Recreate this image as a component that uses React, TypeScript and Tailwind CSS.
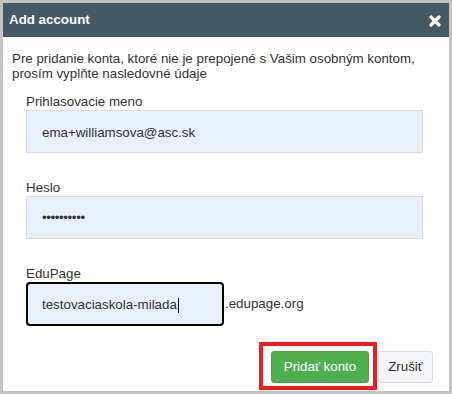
import React from "react";

export default function App() {
  const font = { fontFamily: '"Liberation Sans", Arial, sans-serif' };
  return (
    <div
      className="w-[452px] h-[394px] bg-[#c3c3c3] p-[3px] text-[13.33px] text-[#333]"
      style={font}
    >
      <div className="flex h-full flex-col bg-white">
        <div className="flex h-[34px] items-center justify-between bg-[#455a64] pl-[6px] pr-[8px]">
          <span className="font-bold text-white">Add account</span>
          <svg width="12" height="12" viewBox="0 0 12 12" className="mt-[1px]">
            <path
              d="M2 2 L10 10 M10 2 L2 10"
              stroke="#fff"
              strokeWidth="3.2"
              strokeLinecap="round"
            />
          </svg>
        </div>

        <div className="pl-[9px] pr-[20px] pt-[14px] leading-[15px]">
          Pre pridanie konta, ktoré nie je prepojené s Vašim osobným kontom,
          <br />
          prosím vyplňte nasledovné údaje
        </div>

        <div className="ml-[23px] mr-[26px] mt-[13px] flex flex-col">
          <label className="leading-[16px]">Prihlasovacie meno</label>
          <div className="flex h-[43px] items-center border border-[#dadada] bg-[#e8f0fe] pl-[15px] pt-[2px]">
            ema+williamsova@asc.sk
          </div>

          <label className="mt-[27px] leading-[16px]">Heslo</label>
          <div className="flex h-[43px] items-center border border-[#dadada] bg-[#e8f0fe] pl-[15px] pt-[1px] tracking-[-0.4px]">
            ••••••••••
          </div>

          <label className="mt-[27px] leading-[16px]">EduPage</label>
          <div className="flex items-center">
            <div className="flex h-[44px] w-[198px] items-center rounded-[4px] border-2 border-black bg-[#e8f0fe] pl-[14px] pt-[2px]">
              <span>testovaciaskola-milada</span>
              <span className="ml-[1px] inline-block h-[15px] w-[1px] bg-black" />
            </div>
            <span className="ml-[1px]">.edupage.org</span>
          </div>
        </div>

        <div className="mt-[25px] flex justify-end gap-[9px] pr-[16px]">
          <div className="relative">
            <div className="flex h-[32px] w-[98px] items-center justify-center rounded-[3px] border border-[#47a447] bg-[#4fae4f] text-white">
              Pridať konto
            </div>
            <div className="pointer-events-none absolute -left-[12px] -right-[8px] -top-[9px] -bottom-[7px] border-4 border-[#ed1c24]" />
          </div>
          <div className="flex h-[32px] w-[55px] items-center justify-center rounded-[3px] border border-[#dcdcdc] bg-[#f5f6fa] text-[#333]">
            Zrušiť
          </div>
        </div>
      </div>
    </div>
  );
}
